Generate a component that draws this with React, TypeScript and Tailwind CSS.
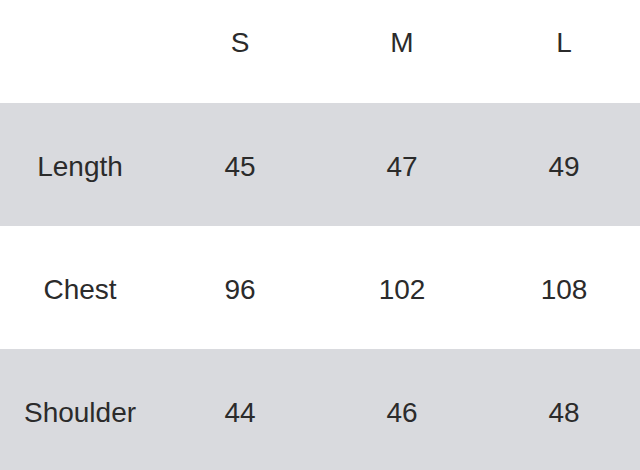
const sizes = ['S', 'M', 'L']

const rows = [
  { label: 'Length', values: ['45', '47', '49'] },
  { label: 'Chest', values: ['96', '102', '108'] },
  { label: 'Shoulder', values: ['44', '46', '48'] },
]

const cols = 'grid grid-cols-[160px_160px_164px_160px]'

export default function App() {
  return (
    <div
      className="w-[640px] h-[470px] overflow-hidden bg-white text-[#2b2b2b] text-[28px]"
      style={{ fontFamily: '"Liberation Sans", Arial, sans-serif' }}
    >
      <div className={`${cols} h-[103px]`}>
        <div />
        {sizes.map(s => (
          <div key={s} className="flex justify-center pt-[29px] leading-none">
            {s}
          </div>
        ))}
      </div>
      {rows.map((row, i) => (
        <div
          key={row.label}
          className={`${cols} h-[123px] items-center ${i % 2 === 0 ? 'bg-[#d9dade]' : 'bg-white'}`}
        >
          <div className="text-center pt-[5px]">{row.label}</div>
          {row.values.map(v => (
            <div key={v} className="text-center pt-[5px]">
              {v}
            </div>
          ))}
        </div>
      ))}
    </div>
  )
}
